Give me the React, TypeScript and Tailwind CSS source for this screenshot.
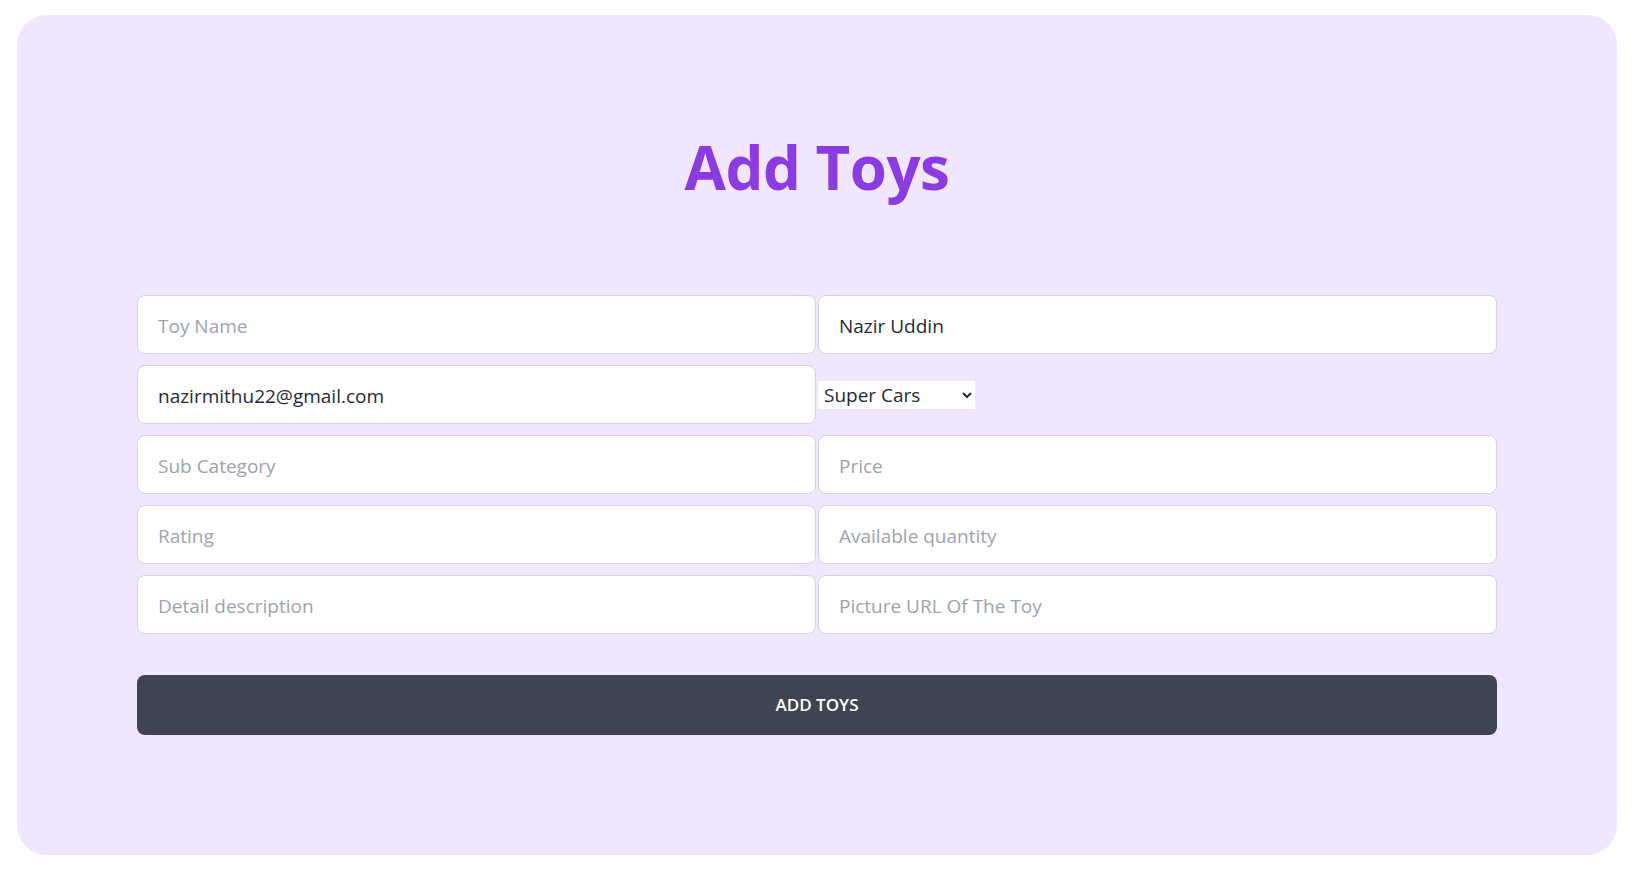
import React from 'react';

const inputCls =
    "h-[59px] w-full rounded-lg border border-[#d4d4d8] bg-white px-5 pt-[2px] text-[19px] text-[#1f2937] placeholder:text-[#9ca3af] outline-none";

export default function App() {
    return (
        <div className="min-h-screen bg-white px-[17px] pt-[15px] pb-[14px]" style={{ fontFamily: '"Open Sans", "Noto Sans", sans-serif' }}>
            <div className="h-[840px] rounded-[30px] bg-[#f0e6fd] px-[120px] pt-[112px]">
                <h1 className="text-center text-[60px] font-bold leading-[80px] tracking-[-0.5px] text-[#8a3be1]">
                    Add Toys
                </h1>

                <form className="mt-[88px]" onSubmit={(e) => e.preventDefault()}>
                    <div className="grid grid-cols-2 gap-x-[2px] gap-y-[11px]">
                        <input className={inputCls} placeholder="Toy Name" />
                        <input className={inputCls} defaultValue="Nazir Uddin" />
                        <input className={inputCls} defaultValue="nazirmithu22@gmail.com" />
                        <select
                            className="h-[28px] w-[157px] self-center bg-white pl-[2px] pr-1 text-[19px] text-[#1f2937] outline-none"
                            defaultValue="Super Cars"
                        >
                            <option>Super Cars</option>
                            <option>Sports Cars</option>
                            <option>Police Cars</option>
                        </select>
                        <input className={inputCls} placeholder="Sub Category" />
                        <input className={inputCls} placeholder="Price" />
                        <input className={inputCls} placeholder="Rating" />
                        <input className={inputCls} placeholder="Available quantity" />
                        <input className={inputCls} placeholder="Detail description" />
                        <input className={inputCls} placeholder="Picture URL Of The Toy" />
                    </div>

                    <button
                        type="submit"
                        className="mt-[41px] h-[60px] w-full rounded-lg bg-[#3e4451] text-[17px] font-semibold text-white"
                    >
                        ADD TOYS
                    </button>
                </form>
            </div>
        </div>
    );
}
